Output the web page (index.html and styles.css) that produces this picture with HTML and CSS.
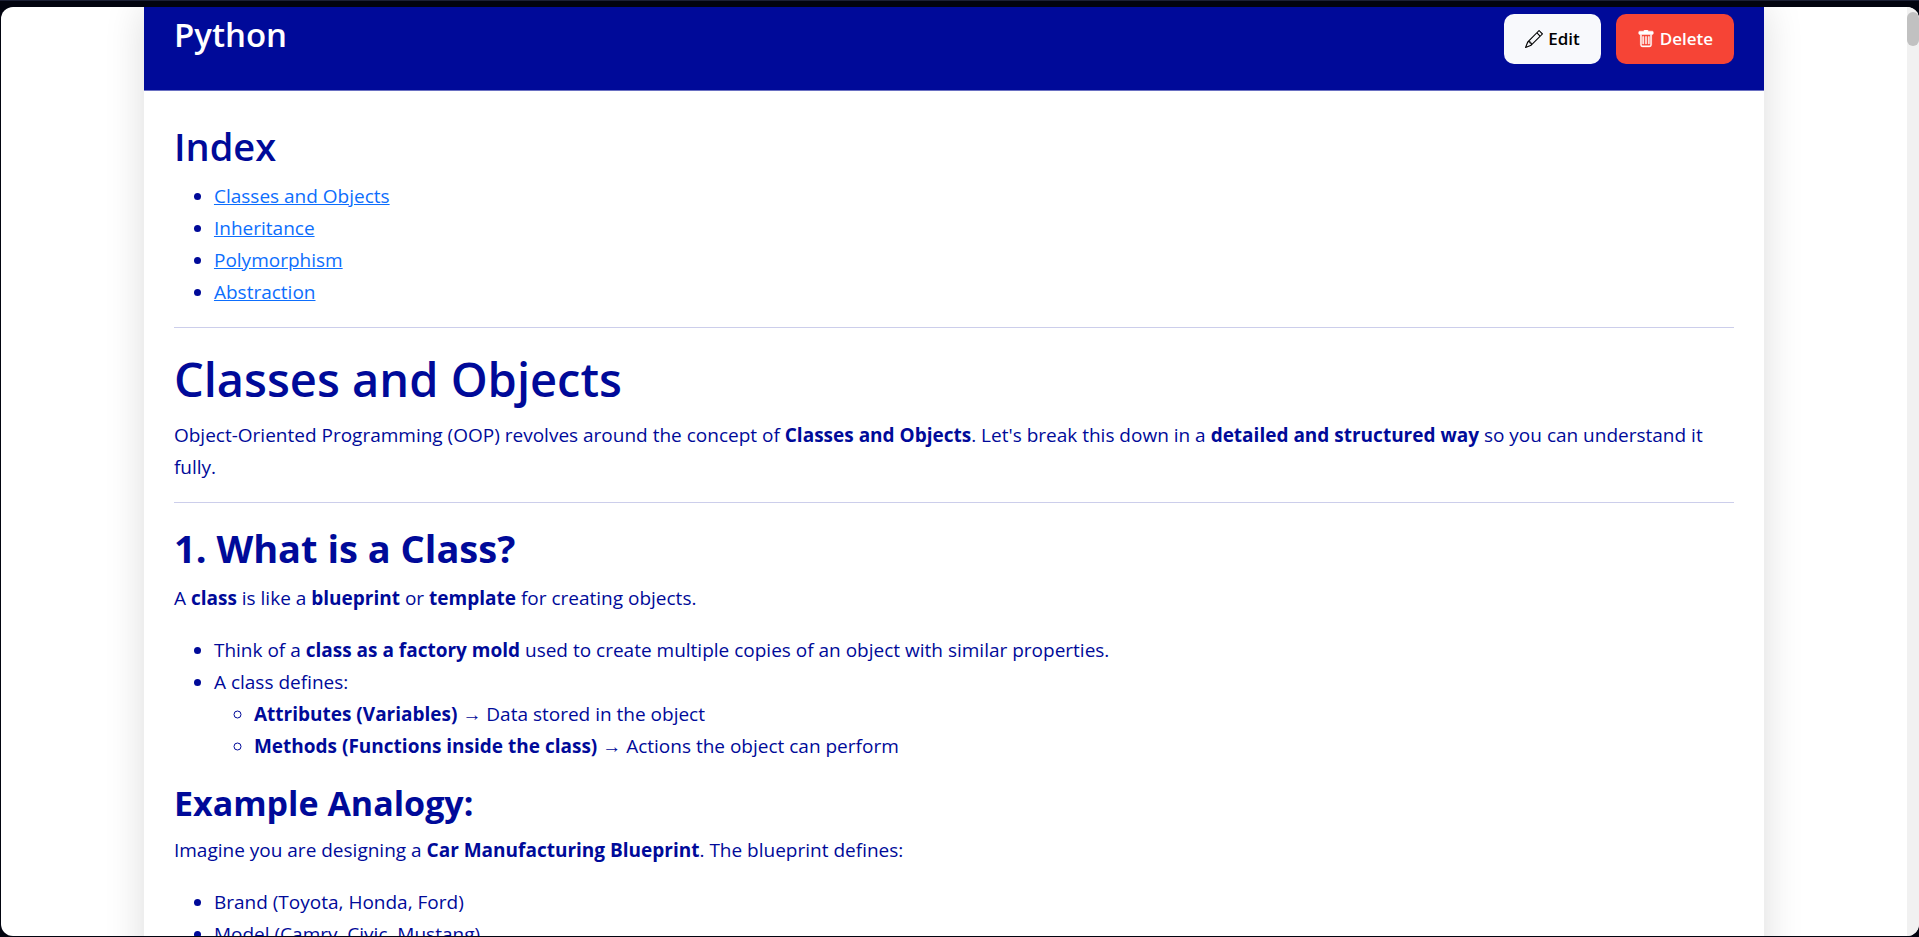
FILE: index.html
```html
<!DOCTYPE html>
<html lang="en">
<head>
  <meta charset="utf-8">
  <title>Python</title>
  <link rel="stylesheet" href="styles.css">
</head>
<body>
  <div class="window">
    <main class="viewport">
      <article class="note">
        <header class="note-header">
          <h3 class="note-title">Python</h3>
          <div class="actions">
            <button type="button" class="btn btn-edit">
              <svg class="icon" viewBox="0 0 16 16" aria-hidden="true"><path d="M12.146.146a.5.5 0 0 1 .708 0l3 3a.5.5 0 0 1 0 .708l-10 10a.5.5 0 0 1-.168.11l-5 2a.5.5 0 0 1-.65-.65l2-5a.5.5 0 0 1 .11-.168zM11.207 2.5 13.5 4.793 14.793 3.5 12.5 1.207zm1.586 3L10.5 3.207 4 9.707V10h.5a.5.5 0 0 1 .5.5v.5h.5a.5.5 0 0 1 .5.5v.5h.293zm-9.761 5.175-.106.106-1.528 3.821 3.821-1.528.106-.106A.5.5 0 0 1 5 12.5V12h-.5a.5.5 0 0 1-.5-.5V11h-.5a.5.5 0 0 1-.468-.325"/></svg>
              <span>Edit</span>
            </button>
            <button type="button" class="btn btn-delete">
              <svg class="icon icon-bold" viewBox="0 0 16 16" aria-hidden="true"><path d="M5.5 5.5A.5.5 0 0 1 6 6v6a.5.5 0 0 1-1 0V6a.5.5 0 0 1 .5-.5m2.5 0a.5.5 0 0 1 .5.5v6a.5.5 0 0 1-1 0V6a.5.5 0 0 1 .5-.5m3 .5a.5.5 0 0 0-1 0v6a.5.5 0 0 0 1 0z"/><path d="M14.5 3a1 1 0 0 1-1 1H13v9a2 2 0 0 1-2 2H5a2 2 0 0 1-2-2V4h-.5a1 1 0 0 1-1-1V2a1 1 0 0 1 1-1H6a1 1 0 0 1 1-1h2a1 1 0 0 1 1 1h3.500a1 1 0 0 1 1 1zM4.118 4 4 4.059V13a1 1 0 0 0 1 1h6a1 1 0 0 0 1-1V4.059L11.882 4z"/></svg>
              <span>Delete</span>
            </button>
          </div>
        </header>
        <div class="note-body">
          <h2>Index</h2>
          <ul>
            <li><a href="#classes">Classes and Objects</a></li>
            <li><a href="#inheritance">Inheritance</a></li>
            <li><a href="#polymorphism">Polymorphism</a></li>
            <li><a href="#abstraction">Abstraction</a></li>
          </ul>
          <hr>
          <h1 id="classes">Classes and Objects</h1>
          <p>Object-Oriented Programming (OOP) revolves around the concept of <strong>Classes and Objects</strong>. Let's break this down in a <strong>detailed and structured way</strong> so you can understand it fully.</p>
          <hr>
          <h2><strong>1. What is a Class?</strong></h2>
          <p>A <strong>class</strong> is like a <strong>blueprint</strong> or <strong>template</strong> for creating objects.</p>
          <ul>
            <li>Think of a <strong>class as a factory mold</strong> used to create multiple copies of an object with similar properties.</li>
            <li>A class defines:
              <ul>
                <li><strong>Attributes (Variables)</strong> → Data stored in the object</li>
                <li><strong>Methods (Functions inside the class)</strong> → Actions the object can perform</li>
              </ul>
            </li>
          </ul>
          <h3><strong>Example Analogy:</strong></h3>
          <p>Imagine you are designing a <strong>Car Manufacturing Blueprint</strong>. The blueprint defines:</p>
          <ul>
            <li>Brand (Toyota, Honda, Ford)</li>
            <li>Model (Camry, Civic, Mustang)</li>
          </ul>
        </div>
      </article>
    </main>
    <div class="scrollbar"><div class="thumb"></div></div>
  </div>
</body>
</html>
```

FILE: styles.css
```css
* {
  box-sizing: border-box;
}

body {
  margin: 0;
  height: 100vh;
  padding: 6px 0 1px 1px;
  border-top: 1px solid #1c2035;
  background: #02040f;
  color: #000a99;
  font-family: "Open Sans", "Noto Sans", sans-serif;
  font-size: 19px;
  line-height: 32px;
}

.window {
  display: flex;
  height: 100%;
  overflow: hidden;
  border-radius: 12px;
  background: #fff;
}

.viewport {
  flex: 1;
  overflow: hidden;
}

.note {
  width: 85%;
  min-height: 100%;
  margin: 0 auto;
  background: #fff;
  box-shadow: 0 0 38px rgba(0, 0, 0, 0.14);
}

.note-header {
  display: flex;
  align-items: center;
  justify-content: space-between;
  padding: 7px 30px 26px;
  border-bottom: 1px solid #6a70c2;
  background: #000a99;
  color: #fff;
}

.actions {
  display: flex;
  gap: 15px;
}

.btn {
  display: flex;
  align-items: center;
  gap: 5px;
  height: 50px;
  padding: 0 21px;
  border: 0;
  border-radius: 10px;
  font: inherit;
  font-size: 17px;
  font-weight: 600;
}

.btn-edit {
  background: #f8f9fc;
  color: #000;
}

.btn-delete {
  background: #f64436;
  color: #fff;
}

.icon {
  width: 18px;
  height: 18px;
  fill: currentColor;
}

.icon-bold {
  stroke: currentColor;
  stroke-width: 0.4;
}

.note-body {
  padding: 31px 30px 30px;
}

h1,
h2,
h3 {
  margin: 0 0 10px;
  font-weight: 600;
}

h1 {
  font-size: 47px;
  line-height: 60px;
}

h2 {
  font-size: 38px;
  line-height: 48px;
}

h3 {
  font-size: 34px;
  line-height: 42px;
}

.note-title {
  margin-bottom: 8px;
  font-size: 33px;
}

strong {
  font-weight: 700;
}

p {
  margin: 0 0 19px;
}

p + ul {
  margin-top: 20px;
}

ul {
  margin: 0 0 20px;
  padding-left: 40px;
}

ul ul {
  margin: 0;
}

ul:has(+ hr) {
  margin-bottom: 19px;
}

hr {
  margin: 19px 0 21px;
  border: 0;
  border-top: 1px solid #ccceeb;
}

a {
  color: #0d6efd;
}

.scrollbar {
  width: 12px;
  padding-top: 5px;
  background: #f1f1f1;
}

.thumb {
  height: 34px;
  border-radius: 6px;
  background: #c1c1c1;
}
```
